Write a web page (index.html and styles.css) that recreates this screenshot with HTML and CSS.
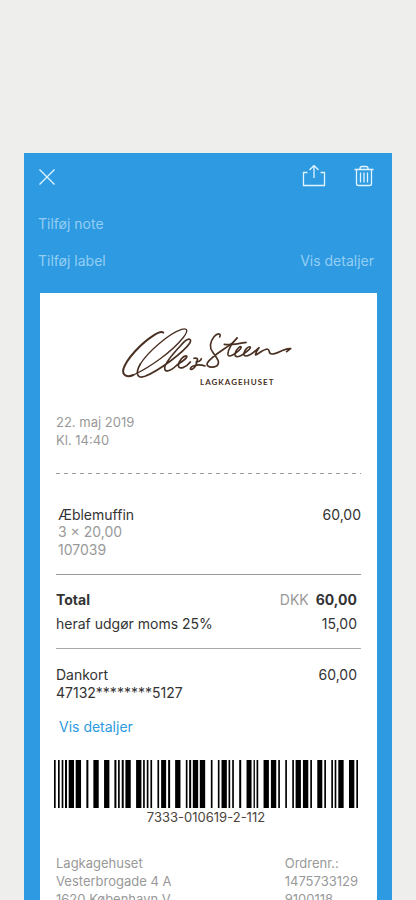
FILE: index.html
```
<!DOCTYPE html>
<html lang="da">
<head>
<meta charset="utf-8">
<meta name="viewport" content="width=device-width, initial-scale=1">
<title>Kvittering</title>
<link rel="stylesheet" href="styles.css">
</head>
<body>
<main class="sheet">
  <header class="toolbar">
    <button class="icon-button" type="button" aria-label="Luk">
      <svg width="18" height="18" viewBox="0 0 18 18"><path d="M1.500 1.500l15 15M16.500 1.500l-15 15"/></svg>
    </button>
    <div class="actions">
      <button class="icon-button" type="button" aria-label="Del">
        <svg width="24" height="24" viewBox="0 0 24 24"><path d="M5.500 7.500h-4v13h21v-13h-4M12 13V0.500M7.500 5L12 0.500 16.500 5"/></svg>
      </button>
      <button class="icon-button" type="button" aria-label="Slet">
        <svg width="20" height="24" viewBox="0 0 20 24"><path d="M.5 4.500h19M2.500 4.500V18.500q0 2 2 2h11q2 0 2-2V4.500M6 4.500V3.500Q6 1.500 8 1.500h4Q14 1.500 14 3.500v1M6.500 7.500v10M10 7.500v10M13.500 7.500v10"/></svg>
      </button>
    </div>
  </header>
  <div class="meta">
    <button class="text-button" type="button">Tilføj note</button>
  </div>
  <div class="meta">
    <button class="text-button" type="button">Tilføj label</button>
    <button class="text-button" type="button">Vis detaljer</button>
  </div>

  <article class="receipt">
    <div class="brand">
      <svg class="signature" width="176" height="54" viewBox="36 36 528 162" aria-label="Ole og Steen" role="img">
        <path class="bold" d="M163 53C158 48 146 53 134 61C98 84 52 131 43 163C39 181 54 188 73 180"/>
        <path class="thin" d="M73 180C121 158 190 110 224 66C239 46 235 38 218 43C180 55 116 111 94 147"/>
        <path d="M94 147C78 175 84 193 108 184C151 166 224 112 242 85C250 71 239 68 226 80C202 106 170 137 167 158C166 175 185 168 204 150C222 138 236 129 233 123C224 120 208 139 208 152C210 165 231 158 244 141"/>
        <path d="M255 130C264 127 270 134 262 140C268 142 275 137 277 131M262 140C266 151 248 168 244 162C244 154 266 145 288 153"/>
        <path d="M332 66C338 54 325 53 315 65C302 81 301 99 311 111C323 128 336 143 323 153C310 159 290 157 295 144C306 126 337 108 361 91C375 80 382 73 384 69"/>
        <path d="M384 69C370 83 355 106 357 119C359 129 377 118 390 106C401 96 396 91 388 99C377 109 374 123 383 125C394 127 410 113 420 104C429 95 422 92 413 100C403 110 401 122 411 123C423 123 438 109 450 98C442 109 439 115 440 120C449 116 462 104 474 102C486 103 475 116 489 117C505 118 526 98 545 101L533 110"/>
        <path d="M346 88C370 91 391 86 411 82"/>
      </svg>
      <span class="brand-name">LAGKAGEHUSET</span>
    </div>

    <p class="muted">22. maj 2019<br>Kl. 14:40</p>
    <svg class="dashes" height="1" aria-hidden="true"><line x1="0" y1=".5" x2="100%" y2=".5"/></svg>

    <section class="item">
      <div>
        <h2 class="item-name">Æblemuffin</h2>
        <p class="item-info">3 × 20,00<br>107039</p>
      </div>
      <span class="item-price">60,00</span>
    </section>

    <section class="totals">
      <div class="line">
        <strong>Total</strong>
        <span><span class="currency">DKK</span><strong>60,00</strong></span>
      </div>
      <div class="line">
        <span>heraf udgør moms 25%</span>
        <span>15,00</span>
      </div>
    </section>

    <section class="payment">
      <div class="line">
        <span>Dankort<br>47132********5127</span>
        <span>60,00</span>
      </div>
      <a class="details" href="#detaljer">Vis detaljer</a>
    </section>

    <figure class="barcode">
      <svg viewBox="27 33 911 143" preserveAspectRatio="none" role="img" aria-label="Stregkode">
        <path d="M27 33h5v143h-5zM39 33h5v143h-5zM50 33h5v143h-5zM60 33h6v143h-6zM71 33h16v143h-16zM92 33h16v143h-16zM124 33h6v143h-6zM145 33h16v143h-16zM177 33h16v143h-16zM208 33h6v143h-6zM219 33h5v143h-5zM230 33h6v143h-6zM241 33h16v143h-16zM273 33h16v143h-16zM294 33h5v143h-5zM305 33h5v143h-5zM316 33h5v143h-5zM337 33h5v143h-5zM348 33h15v143h-15zM369 33h6v143h-6zM390 33h16v143h-16zM422 33h5v143h-5zM432 33h6v143h-6zM443 33h16v143h-16zM464 33h16v143h-16zM497 33h5v143h-5zM518 33h5v143h-5zM529 33h16v143h-16zM550 33h5v143h-5zM561 33h5v143h-5zM582 33h6v143h-6zM604 33h15v143h-15zM625 33h4v143h-4zM634 33h5v143h-5zM655 33h16v143h-16zM677 33h16v143h-16zM699 33h5v143h-5zM720 33h5v143h-5zM741 33h5v143h-5zM751 33h16v143h-16zM773 33h16v143h-16zM795 33h5v143h-5zM816 33h15v143h-15zM837 33h5v143h-5zM858 33h5v143h-5zM868 33h5v143h-5zM879 33h16v143h-16zM911 33h16v143h-16zM933 33h5v143h-5z"/>
      </svg>
      <figcaption>7333-010619-2-112</figcaption>
    </figure>

    <footer class="store">
      <address>Lagkagehuset<br>Vesterbrogade 4 A<br>1620 København V</address>
      <p>Ordrenr.:<br>1475733129<br>9100118</p>
    </footer>
  </article>
</main>
</body>
</html>
```
FILE: styles.css
```
* {
  box-sizing: border-box;
}

body {
  margin: 0;
  height: 100vh;
  overflow: hidden;
  background: #eeefed;
  color: #333;
  font: 14px/18px Inter, "Liberation Sans", sans-serif;
}

h2, p, figure {
  margin: 0;
}

button {
  padding: 0;
  border: 0;
  background: none;
  color: inherit;
  font: inherit;
}

svg {
  display: block;
}

.sheet {
  margin: 153px 24px 0;
  padding: 0 15px 0 16px;
  background: #2d9ae1;
}

.toolbar {
  display: flex;
  justify-content: space-between;
  align-items: center;
  height: 48px;
  margin: 0 3px 0 -2px;
}

.icon-button svg {
  fill: none;
  stroke: #e2f5ff;
  stroke-width: 1.3;
}

.actions {
  display: flex;
  gap: 28px;
}

.meta {
  display: flex;
  justify-content: space-between;
  margin: 0 3px 0 -2px;
  padding: 14px 0 5px;
}

.text-button {
  color: #95cef3;
}

.receipt {
  margin-top: 18px;
  padding: 34px 16px 48px;
  background: #fff;
}

.brand {
  width: 176px;
  margin: 0 auto 27px;
}

.signature {
  fill: none;
  stroke: #493022;
  stroke-width: 5;
  stroke-linecap: round;
  stroke-linejoin: round;
}

.signature .bold {
  stroke-width: 6;
}

.signature .thin {
  stroke-width: 4;
}

.brand-name {
  display: block;
  margin-top: -3px;
  padding-right: 22px;
  color: #493022;
  font: bold 8px/8px Lato, sans-serif;
  letter-spacing: 1px;
  text-align: right;
}

.muted, .store {
  color: #999;
  font-size: 13px;
}

.dashes {
  width: 100%;
  margin: 24px 0 33px;
}

.dashes line {
  stroke: #999;
  stroke-dasharray: 4 4;
}

.item {
  display: flex;
  justify-content: space-between;
  padding: 0 0 15px 2px;
  border-bottom: 1px solid #999;
}

.item-name, .item-price {
  font-size: 14px;
  font-weight: 400;
  line-height: 16px;
}

.item-info {
  color: #999;
}

.totals {
  padding: 16px 0 15px;
  border-bottom: 1px solid #aaa;
}

.line {
  display: flex;
  justify-content: space-between;
  padding-right: 4px;
}

.totals .line + .line {
  margin-top: 6px;
}

.currency {
  margin-right: 7px;
  color: #999;
}

.payment {
  padding-top: 17px;
}

.details {
  display: inline-block;
  margin: 16px 0 0 3px;
  color: #2d9ae1;
  text-decoration: none;
}

.barcode {
  margin: 24px 3px 0 -2px;
  color: #4d443c;
  font-size: 13px;
  text-align: center;
}

.barcode svg {
  width: 100%;
  height: 48px;
  fill: #000;
}

.store {
  display: flex;
  justify-content: space-between;
  margin-top: 28px;
  padding-right: 3px;
}

.store address {
  font-style: normal;
}
```
